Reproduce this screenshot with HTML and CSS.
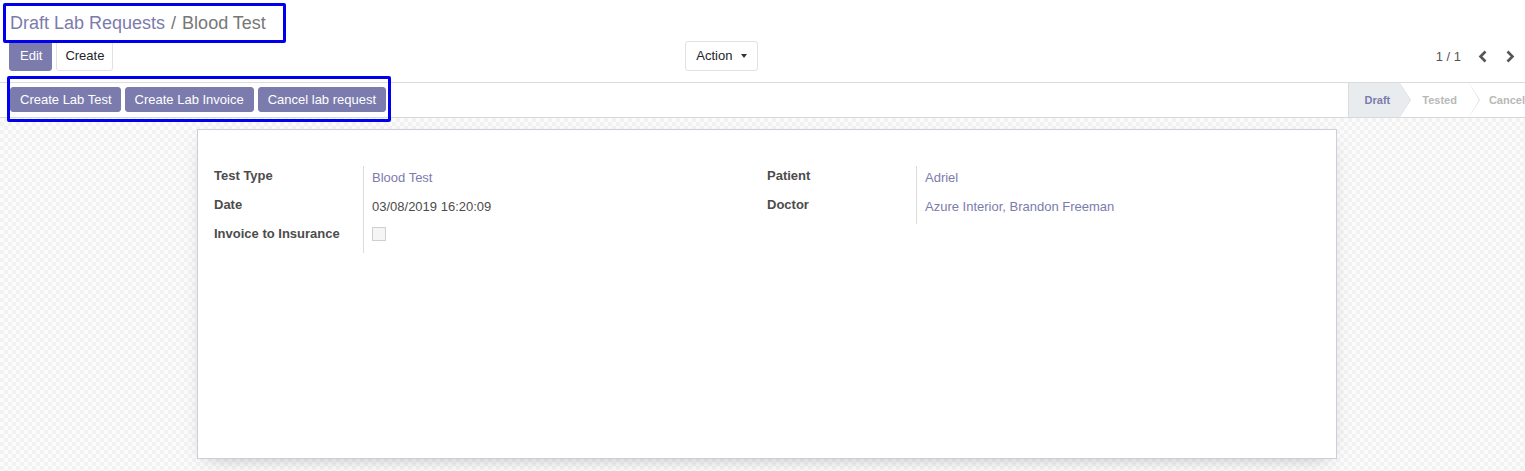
FILE: index.html
```html
<!DOCTYPE html>
<html>
<head>
<meta charset="utf-8">
<link rel="stylesheet" href="styles.css">
</head>
<body>
<div class="app">
  <div class="control-panel">
    <div class="breadcrumb"><a class="crumb-link">Draft Lab Requests</a><span class="crumb-sep">/</span><span class="crumb-active">Blood Test</span></div>
    <div class="cp-row">
      <div class="cp-left">
        <div class="cp-buttons">
          <button class="btn btn-primary btn-edit">Edit</button>
          <button class="btn btn-secondary btn-create">Create</button>
        </div>
        <button class="btn btn-secondary btn-action">Action <span class="caret"></span></button>
      </div>
      <div class="cp-right">
        <span class="pager-value">1 / 1</span>
        <span class="pager-btn"><svg width="10" height="13" viewBox="0 0 10 13"><path d="M7.5 1.5 L2.5 6.5 L7.5 11.5" fill="none" stroke="#555" stroke-width="2.6"/></svg></span>
        <span class="pager-btn"><svg width="10" height="13" viewBox="0 0 10 13"><path d="M2.5 1.5 L7.5 6.5 L2.5 11.5" fill="none" stroke="#555" stroke-width="2.6"/></svg></span>
      </div>
    </div>
  </div>
  <div class="statusbar">
    <div class="sb-buttons">
      <button class="btn btn-primary btn-sm">Create Lab Test</button>
      <button class="btn btn-primary btn-sm">Create Lab Invoice</button>
      <button class="btn btn-primary btn-sm">Cancel lab request</button>
    </div>
    <div class="sb-status">
      <span class="status current">Draft</span>
      <span class="status">Tested</span>
      <span class="status last">Cancel</span>
    </div>
  </div>
  <div class="sheet-bg">
    <div class="sheet">
      <div class="groups">
        <div class="group">
          <div class="row"><div class="label">Test Type</div><div class="value link">Blood Test</div></div>
          <div class="row"><div class="label">Date</div><div class="value">03/08/2019 16:20:09</div></div>
          <div class="row"><div class="label">Invoice to Insurance</div><div class="value"><span class="checkbox"></span></div></div>
        </div>
        <div class="group">
          <div class="row"><div class="label">Patient</div><div class="value link">Adriel</div></div>
          <div class="row"><div class="label">Doctor</div><div class="value link">Azure Interior, Brandon Freeman</div></div>
        </div>
      </div>
    </div>
  </div>
  <div class="annot annot-1"></div>
  <div class="annot annot-2"></div>
</div>
</body>
</html>
```
FILE: styles.css
```css
* { box-sizing: border-box; }
html, body { margin: 0; padding: 0; }
body {
  font-family: "Liberation Sans", Arial, sans-serif;
  font-size: 13px;
  color: #4c4c4c;
  background: #fff;
  width: 1525px;
  height: 471px;
  overflow: hidden;
}
.app { position: relative; height: 471px; display: flex; flex-direction: column; }

.control-panel {
  padding: 11px 10px 10px 9px;
  border-bottom: 1px solid #dcdcdc;
  height: 83px;
}
.breadcrumb {
  font-size: 18px;
  line-height: 24px;
  height: 24px;
  padding-left: 1px;
  white-space: nowrap;
}
.crumb-link { color: #7c7bad; }
.crumb-sep { color: #777; padding: 0 6px; }
.crumb-active { color: #777; }

.cp-row { display: flex; margin-top: 6px; height: 30px; }
.cp-left { width: 749px; display: flex; justify-content: space-between; }
.cp-right { flex: 1; display: flex; justify-content: flex-end; align-items: center; }
.cp-buttons { display: flex; gap: 4px; }

.btn {
  font-family: inherit;
  font-size: 13px;
  line-height: 18px;
  border-radius: 3px;
  cursor: pointer;
  margin: 0;
}
.btn-primary {
  background: #7c7bad;
  color: #fff;
  border: 1px solid #7c7bad;
  padding: 5px 10px;
}
.btn-secondary {
  background: #fff;
  color: #212529;
  border: 1px solid #dee2e6;
  padding: 5px 10px;
}
.btn-edit { padding: 5px 9px 5px 10px; }
.btn-create { padding: 5px 8px; }
.btn-action { padding: 5px 10px; }
.caret {
  display: inline-block;
  width: 0; height: 0;
  border-left: 3.5px solid transparent;
  border-right: 3.5px solid transparent;
  border-top: 4px solid #333;
  vertical-align: 2px;
  margin-left: 5px;
}

.pager-value { color: #555; margin-right: 6px; }
.pager-btn { display: inline-flex; width: 32px; justify-content: center; }
.pager-btn:last-child { width: 16px; justify-content: flex-end; }

.statusbar {
  display: flex;
  justify-content: space-between;
  height: 35px;
  border-bottom: 1px solid #d8d8d8;
  background: #fff;
  overflow: hidden;
}
.sb-buttons { display: flex; gap: 4px; padding: 4px 0 0 10px; }
.btn-sm { padding: 3px 9px; height: 25px; line-height: 17px; }
.btn-sm:first-child { padding: 3px 8px 3px 9px; }

.sb-status { display: flex; height: 34px; }
.status {
  position: relative;
  font-size: 11px;
  font-weight: bold;
  color: #b8b8b8;
  line-height: 34px;
  padding: 0 12px 0 22px;
  background: #fff;
  white-space: nowrap;
}
.status.current {
  background: #e9ecef;
  color: #7c7bad;
  padding-left: 16px;
  padding-right: 10px;
  border-left: 1px solid #dcdcdc;
}
.status::before, .status::after {
  content: "";
  position: absolute;
  top: 0;
  width: 0; height: 0;
  border-top: 17px solid transparent;
  border-bottom: 17px solid transparent;
  z-index: 2;
}
.status::before { right: -11px; border-left: 11px solid #dcdcdc; }
.status::after { right: -10px; border-left: 10px solid #fff; }
.status.current::after { border-left-color: #e9ecef; }
.status.last::before, .status.last::after { display: none; }
.status.last { padding: 0 0 0 20px; }

.sheet-bg {
  flex: 1;
  padding-top: 11px;
  padding-left: 197px;
  background-color: #f7f7f7;
  background-image: conic-gradient(#f2f2f2 25%, #fbfbfb 0 50%, #f2f2f2 0 75%, #fbfbfb 0);
  background-size: 8px 8px;
}
.sheet {
  width: 1140px;
  height: 330px;
  background: #fff;
  border: 1px solid #cfcdd9;
  box-shadow: 0 6px 18px -10px rgba(0,0,0,0.35);
  padding: 36px 16px 0 16px;
}
.groups { display: flex; }
.group { width: 553px; display: flex; flex-direction: column; }
.row { display: flex; height: 29px; }
.label {
  width: 149px;
  font-weight: bold;
  color: #4c4c4c;
  line-height: 19px;
  padding-top: 0;
}
.value {
  border-left: 1px solid #dcdcdc;
  padding-left: 8px;
  line-height: 19px;
  padding-top: 2px;
  flex: 1;
}
.value.link { color: #7c7bad; }
.checkbox {
  display: inline-block;
  width: 14px; height: 14px;
  margin-top: 1px;
  border: 1px solid #cfcfcf;
  background: #f5f5f5;
}

.annot {
  position: absolute;
  border: 3px solid #0000ee;
  border-radius: 2px;
  pointer-events: none;
}
.annot-1 { left: 3px; top: 3px; width: 283px; height: 40px; }
.annot-2 { left: 7px; top: 76px; width: 384px; height: 46px; }
```
